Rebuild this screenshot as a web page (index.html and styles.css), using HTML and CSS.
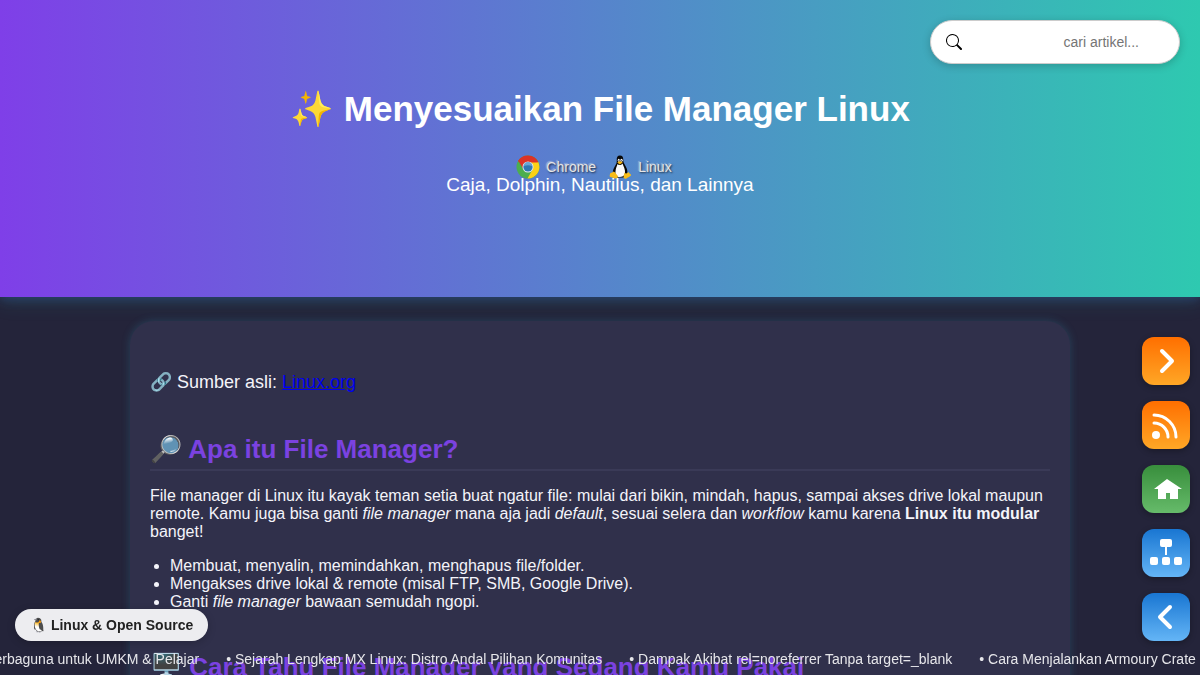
FILE: index.html
```html
<!DOCTYPE html>
<html lang="id">
<head>
<meta charset="utf-8">
<meta name="viewport" content="width=device-width, initial-scale=1">
<title>Menyesuaikan File Manager Linux</title>
<link rel="stylesheet" href="styles.css">
</head>
<body>
<header class="hero">
  <h1 class="hero-title">✨ Menyesuaikan File Manager Linux</h1>
  <div class="hero-sub">
    <ul class="platforms">
      <li class="platform">
        <svg class="platform-icon" viewBox="0 0 48 48" aria-hidden="true">
          <circle cx="24" cy="24" r="23" fill="#4cae4f"/>
          <path d="M24 24 4 12.500A23 23 0 0 1 44.500 14H24Z" fill="#dc3326"/>
          <path d="M24 14h20.500A23 23 0 0 1 23 47L33 29Z" fill="#fcd116"/>
          <path d="M4 12.500 15 30l9-6Z" fill="#4cae4f"/>
          <path d="M4.500 11.500 14 27l3-12h27A23 23 0 0 0 4.500 11.500Z" fill="#dc3326"/>
          <circle cx="24" cy="24" r="11" fill="#e4eaf0"/>
          <circle cx="24" cy="24" r="9.200" fill="#2f78b5"/>
          <path d="M16 22a8 8 0 0 1 16 0q-8-3-16 0Z" fill="#69a8d5"/>
        </svg>
        <span>Chrome</span>
      </li>
      <li class="platform">
        <svg class="platform-icon" viewBox="0 0 48 48" aria-hidden="true">
          <path d="M24 1c-5 0-7 4-6.500 9 .5 6-1 8-4 13-3 5-5 10-3 15l7 7h14l7-8c1-6-1-11-4-16-3-5-4-7-4-12 0-5-2-8-6.500-8Z" fill="#080808"/>
          <path d="M19 18c2 3 7 3 10-1 2 6 6 12 5 19-1 6-6 8-11 8-6 0-9-5-8-11 0-6 3-10 4-15Z" fill="#fafafa"/>
          <ellipse cx="21.500" cy="10.500" rx="2" ry="3" fill="#fff"/>
          <ellipse cx="27" cy="10.500" rx="2.400" ry="3" fill="#fff"/>
          <circle cx="22" cy="11" r="1" fill="#111"/><circle cx="26.500" cy="11" r="1" fill="#111"/>
          <path d="m18.500 15 5-3 6 3-6 4Z" fill="#f5b512"/>
          <path d="M11 33c3 0 5 5 8 8 2 3 0 6-4 6L5 44c-3-1-1-4-1-6 0-3 5-2 7-5Z" fill="#f8bd19"/>
          <path d="M33 35c2 3 6 2 8-1 1 3 5 4 5 6 0 3-6 4-9 7-3 1-6 0-6-3Z" fill="#f8bd19"/>
        </svg>
        <span>Linux</span>
      </li>
    </ul>
    <p class="hero-text">Caja, Dolphin, Nautilus, dan Lainnya</p>
  </div>
  <form class="search" role="search">
    <svg class="search-icon" viewBox="0 0 16 16" fill="currentColor" aria-hidden="true">
      <path d="M11.742 10.344a6.500 6.500 0 1 0-1.397 1.398h-.001q.044.060.098.115l3.850 3.850a1 1 0 0 0 1.415-1.414l-3.850-3.850a1 1 0 0 0-.115-.1zM12 6.500a5.500 5.500 0 1 1-11 0 5.500 5.500 0 0 1 11 0"/>
    </svg>
    <input class="search-input" type="search" placeholder="cari artikel..." aria-label="cari artikel">
  </form>
</header>

<main class="card">
  <p class="source">🔗 Sumber asli: <a href="#linux">Linux.org</a></p>
  <section class="section">
    <h2 class="section-title">🔎 Apa itu File Manager?</h2>
    <p class="section-text">File manager di Linux itu kayak teman setia buat ngatur file: mulai dari bikin, mindah, hapus, sampai akses drive lokal maupun remote. Kamu juga bisa ganti <em>file manager</em> mana aja jadi <em>default</em>, sesuai selera dan <em>workflow</em> kamu karena <strong>Linux itu modular</strong> banget!</p>
    <ul class="section-list">
      <li>Membuat, menyalin, memindahkan, menghapus file/folder.</li>
      <li>Mengakses drive lokal &amp; remote (misal FTP, SMB, Google Drive).</li>
      <li>Ganti <em>file manager</em> bawaan semudah ngopi.</li>
    </ul>
  </section>
  <section class="section">
    <h2 class="section-title">🖥️ Cara Tahu File Manager yang Sedang Kamu Pakai</h2>
  </section>
</main>

<nav class="side-nav" aria-label="Navigasi">
  <a class="side-link orange" href="#next" aria-label="Berikutnya">
    <svg class="side-icon" viewBox="0 0 48 48"><path d="m20 14 10 10-10 10" fill="none" stroke="#fff" stroke-width="4" stroke-linecap="round" stroke-linejoin="round"/></svg>
  </a>
  <a class="side-link orange" href="#rss" aria-label="RSS">
    <svg class="side-icon" viewBox="0 0 48 48"><circle cx="14" cy="34" r="4" fill="#fff"/><path d="M12 22a14 14 0 0 1 14 14M12 14a22 22 0 0 1 22 22" fill="none" stroke="#fff" stroke-width="3" stroke-linecap="round"/></svg>
  </a>
  <a class="side-link green" href="#home" aria-label="Beranda">
    <svg class="side-icon" viewBox="0 0 48 48"><path d="M25 14 12 24h4v10h8v-6h4v6h8V24h4Z" fill="#fff"/></svg>
  </a>
  <a class="side-link blue" href="#sitemap" aria-label="Peta situs">
    <svg class="side-icon" viewBox="0 0 48 48" fill="#fff"><rect x="18" y="10" width="12" height="8" rx="2"/><path d="M23 17h2v9h-2z"/><rect x="8" y="28" width="8" height="8" rx="2"/><rect x="20" y="28" width="8" height="8" rx="2"/><rect x="32" y="28" width="8" height="8" rx="2"/></svg>
  </a>
  <a class="side-link blue" href="#prev" aria-label="Sebelumnya">
    <svg class="side-icon" viewBox="0 0 48 48"><path d="M28 14 18 24l10 10" fill="none" stroke="#fff" stroke-width="4" stroke-linecap="round" stroke-linejoin="round"/></svg>
  </a>
</nav>

<a class="badge" href="#topic">🐧 Linux &amp; Open Source</a>

<div class="ticker">
  <ul class="ticker-list">
    <li class="ticker-item">Aplikasi Serbaguna untuk UMKM &amp; Pelajar</li>
    <li class="ticker-item">Sejarah Lengkap MX Linux: Distro Andal Pilihan Komunitas</li>
    <li class="ticker-item">Dampak Akibat rel=noreferrer Tanpa target=_blank</li>
    <li class="ticker-item">Cara Menjalankan Armoury Crate di Linux</li>
  </ul>
</div>
</body>
</html>
```
FILE: styles.css
```css
* { box-sizing: border-box; }

body {
  margin: 0;
  height: 100vh;
  overflow: hidden;
  background: #24243a;
  color: #f4f4fa;
  font-family: "Liberation Sans", Arial, sans-serif;
  font-size: 16px;
  line-height: 18px;
}

.hero {
  position: relative;
  padding: 88px 20px 102px;
  background: linear-gradient(90deg, #7f3fe8, #2ec9b0);
  box-shadow: 0 2px 10px rgba(50, 100, 190, 0.35), 0 4px 20px rgba(46, 201, 176, 0.15);
  color: #fff;
  text-align: center;
}

.hero-title {
  margin: 0 0 45px;
  font-size: 35px;
  line-height: 42px;
}

.hero-sub { position: relative; }

.hero-text {
  margin: 0;
  font-size: 19px;
  line-height: 20px;
}

.platforms {
  position: absolute;
  top: -20px;
  left: 0;
  right: 12px;
  display: flex;
  justify-content: center;
  gap: 12px;
  margin: 0;
  padding: 0;
  list-style: none;
}

.platform {
  display: flex;
  align-items: center;
  gap: 6px;
  color: #e6e6e6;
  font-size: 14px;
  line-height: 24px;
  text-shadow: 1px 1px 2px rgba(0, 0, 0, 0.7), -1px -1px 1px rgba(255, 255, 255, 0.4);
}

.platform-icon { width: 24px; height: 24px; }

.search {
  position: absolute;
  top: 20px;
  right: 20px;
  display: flex;
  align-items: center;
  width: 250px;
  height: 44px;
  padding: 0 26px 0 15px;
  border: 1px solid #ccc;
  border-radius: 22px;
  background: #fff;
  box-shadow: 0 2px 8px rgba(0, 0, 0, 0.2);
  color: #000;
}

.search-icon { flex: none; width: 16px; height: 16px; }

.search-input {
  flex: 1;
  min-width: 0;
  padding: 0;
  border: 0;
  outline: 0;
  background: transparent;
  font: 14px "Liberation Sans", Arial, sans-serif;
  text-align: right;
}

.card {
  max-width: 940px;
  margin: 24px auto;
  padding: 50px 20px;
  border-radius: 24px;
  background: #30304b;
  box-shadow: 0 0 8px rgba(46, 160, 190, 0.25);
}

.source {
  margin: 0 0 40px;
  font-size: 18px;
  line-height: 22px;
}

.source a { color: #0000ee; }

.section { margin-bottom: 40px; }

.section-title {
  margin: 0 0 16px;
  padding-bottom: 4px;
  border-bottom: 2px solid #3a3a57;
  color: #7b42e0;
  font-size: 26px;
  line-height: 32px;
}

.section-text { margin: 0 0 16px; }

.section-list { margin: 0; padding-left: 20px; }

.side-nav {
  position: fixed;
  top: 337px;
  right: 10px;
  display: grid;
  gap: 16px;
}

.side-link {
  display: block;
  width: 48px;
  height: 48px;
  border-radius: 12px;
  box-shadow: 0 2px 6px rgba(0, 0, 0, 0.3);
}

.side-icon { display: block; width: 48px; height: 48px; }

.orange { background: linear-gradient(#ff6f00, #ffa726); }
.green { background: linear-gradient(#388e3c, #66bb6a); }
.blue { background: linear-gradient(#1976d2, #64b5f6); }

.badge {
  position: fixed;
  bottom: 34px;
  left: 15px;
  padding: 7px 15px;
  border-radius: 16px;
  background: #ededf0;
  box-shadow: 0 2px 8px rgba(0, 0, 0, 0.2);
  color: #222;
  font-size: 14px;
  font-weight: bold;
  text-decoration: none;
}

.ticker {
  position: fixed;
  right: 0;
  bottom: 0;
  left: 0;
  height: 25px;
  overflow: hidden;
}

.ticker-list {
  display: flex;
  gap: 27px;
  width: max-content;
  margin: 0 0 0 -75px;
  padding: 0;
  list-style: none;
  color: #e6e6ea;
  font-size: 14px;
  white-space: nowrap;
}

.ticker-item::before { content: "• "; }
```
